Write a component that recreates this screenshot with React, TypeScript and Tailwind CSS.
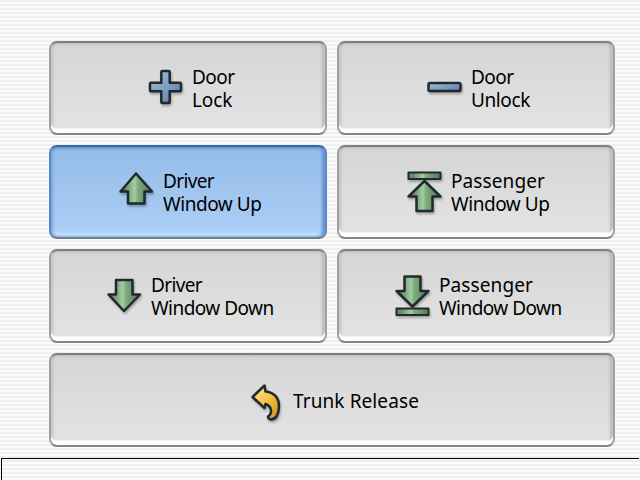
import type { ReactNode } from 'react';

type IconKind = 'plus' | 'minus' | 'up' | 'upLimit' | 'down' | 'downLimit' | 'undo';

const shapes: Record<IconKind, ReactNode> = {
  plus: (
    <path d="M14.3 2h6.4q1 0 1 1v10.7h10.3q1 0 1 1v6.6q0 1-1 1h-10.3v10.7q0 1-1 1h-6.4q-1 0-1-1v-10.7h-10.3q-1 0-1-1v-6.6q0-1 1-1h10.3v-10.7q0-1 1-1z" fill="url(#blue)" />
  ),
  minus: <rect x="1.5" y="13" width="32" height="8" rx="1.5" fill="url(#blue)" />,
  up: <path d="M17 1.5L33 19.5H25.5V31.5H9V19.5H1.5Z" fill="url(#green)" />,
  upLimit: (
    <>
      <rect x="1.5" y="1.5" width="32" height="6.5" strokeWidth="2" fill="url(#green)" />
      <path d="M17.5 10L33.5 25.5H25.5V40H9.5V25.5H1.5Z" fill="url(#green)" />
    </>
  ),
  down: <path d="M9 2H25.5V16.5H33L17 33L1.5 16.5H9Z" fill="url(#green)" />,
  downLimit: (
    <>
      <path d="M9.5 1.5H25.5V16H33.5L17.5 31.5L1.5 16H9.5Z" fill="url(#green)" />
      <rect x="1.5" y="33.5" width="32" height="6.5" strokeWidth="2" fill="url(#green)" />
    </>
  ),
  undo: (
    <path d="M1.5 14L13.5 2.5L14.5 8.5C23 9 28 15 28 23C28 31 25 36.5 20 36.5Q17 36 17 33.5C22 30 20.5 23 14.5 21L13.5 25Z" fill="url(#gold)" />
  ),
};

function Icon({ kind, className }: { kind: IconKind; className: string }) {
  return (
    <svg
      className={`shrink-0 overflow-visible drop-shadow-[1px_2px_1px_rgba(0,0,0,0.28)] ${className}`}
      stroke="#20292c"
      strokeWidth="2.5"
      strokeLinejoin="round"
    >
      {shapes[kind]}
    </svg>
  );
}

interface ButtonProps {
  kind: IconKind;
  icon: string;
  pad: string;
  lines: { text: string; style: string }[];
  active?: boolean;
  wide?: boolean;
}

function PanelButton({ kind, icon, pad, lines, active, wide }: ButtonProps) {
  const face = active
    ? 'border-[#5c88c6] border-t-[#3c67a8] border-b-[#74808f] bg-linear-to-b from-[#94bce9] to-[#accff6] shadow-[inset_0_2px_2px_#6d9ad6,inset_2px_0_3px_#7ba8e2,inset_-3px_0_3px_#6492d2,inset_0_-4px_3px_#c9e8ff]'
    : 'border-[#a2a2a2] border-t-[#808080] border-b-[#858585] bg-linear-to-b from-[#d5d5d5] to-[#e4e4e4] shadow-[inset_0_-4px_0_#ffffff,inset_0_1px_2px_#c4c4c4,inset_2px_0_3px_#c2c2c2,inset_-3px_0_3px_#b9b9b9,inset_0_-5px_1px_#f2f2f2]';
  return (
    <button className={`flex h-[94px] items-start rounded-[8px] border-2 text-left ${face} ${pad} ${wide ? 'col-span-2' : ''}`}>
      <Icon kind={kind} className={icon} />
      <span className="flex flex-col text-[19px] leading-[23px] whitespace-nowrap text-black">
        {lines.map((line) => (
          <span key={line.text} className={line.style}>{line.text}</span>
        ))}
      </span>
    </button>
  );
}

const buttons: ButtonProps[] = [
  { kind: 'plus', icon: 'mt-[3px] mr-[9px] h-[36px] w-[35px]', pad: 'pt-[23px] pl-[97px]', lines: [{ text: 'Door', style: 'tracking-[-0.5px]' }, { text: 'Lock', style: 'tracking-[-0.1px]' }] },
  { kind: 'minus', icon: 'mt-[4px] mr-[9px] h-[34px] w-[35px]', pad: 'pt-[23px] pl-[88px]', lines: [{ text: 'Door', style: 'tracking-[-0.5px]' }, { text: 'Unlock', style: 'tracking-[-0.4px]' }] },
  { kind: 'up', icon: 'mt-[2px] mr-[9px] h-[36px] w-[35px]', pad: 'pt-[23px] pl-[68px]', active: true, lines: [{ text: 'Driver', style: 'tracking-[-0.65px]' }, { text: 'Window Up', style: 'tracking-[-0.45px]' }] },
  { kind: 'upLimit', icon: 'mt-[1px] mr-[9px] h-[42px] w-[35px]', pad: 'pt-[23px] pl-[68px]', lines: [{ text: 'Passenger', style: 'tracking-[0.1px]' }, { text: 'Window Up', style: 'tracking-[-0.45px]' }] },
  { kind: 'down', icon: 'mt-[4px] mr-[9px] h-[36px] w-[35px]', pad: 'pt-[23px] pl-[56px]', lines: [{ text: 'Driver', style: 'tracking-[-0.65px]' }, { text: 'Window Down', style: 'tracking-[-0.55px]' }] },
  { kind: 'downLimit', icon: 'mt-[1px] mr-[9px] h-[42px] w-[35px]', pad: 'pt-[23px] pl-[56px]', lines: [{ text: 'Passenger', style: 'tracking-[0.1px]' }, { text: 'Window Down', style: 'tracking-[-0.55px]' }] },
  { kind: 'undo', icon: '-mt-[7px] mr-[10px] h-[38px] w-[32px]', pad: 'pt-[35px] pl-[200px]', wide: true, lines: [{ text: 'Trunk Release', style: 'tracking-[0.1px]' }] },
];

export default function App() {
  return (
    <main className="flex h-[480px] w-[640px] flex-col overflow-hidden bg-[repeating-linear-gradient(to_bottom,#eeeeee_0px,#eeeeee_2px,#fcfcfc_2px,#fcfcfc_4px)] font-['Noto_Sans','Open_Sans',sans-serif]">
      <svg className="absolute size-0" aria-hidden="true">
        <defs>
          <linearGradient id="blue" x1="0" y1="0" x2="1" y2="1">
            <stop stopColor="#a4bcda" />
            <stop offset="0.5" stopColor="#7f9fc4" />
            <stop offset="1" stopColor="#57779f" />
          </linearGradient>
          <linearGradient id="green">
            <stop offset="0.15" stopColor="#668d69" />
            <stop offset="0.45" stopColor="#a5cda3" />
            <stop offset="0.55" stopColor="#7fab7d" />
            <stop offset="1" stopColor="#537a53" />
          </linearGradient>
          <linearGradient id="gold" x1="0" y1="0" x2="1" y2="1">
            <stop stopColor="#ffe98d" />
            <stop offset="0.5" stopColor="#f6c24b" />
            <stop offset="1" stopColor="#c98a1b" />
          </linearGradient>
        </defs>
      </svg>
      <section className="grid h-[458px] shrink-0 grid-cols-[278px_278px] content-start gap-[10px] pt-[41px] pl-[49px]">
        {buttons.map((button) => (
          <PanelButton key={button.kind} {...button} />
        ))}
      </section>
      <footer className="mr-px ml-px h-[22px] border-t border-l border-black" />
    </main>
  );
}
